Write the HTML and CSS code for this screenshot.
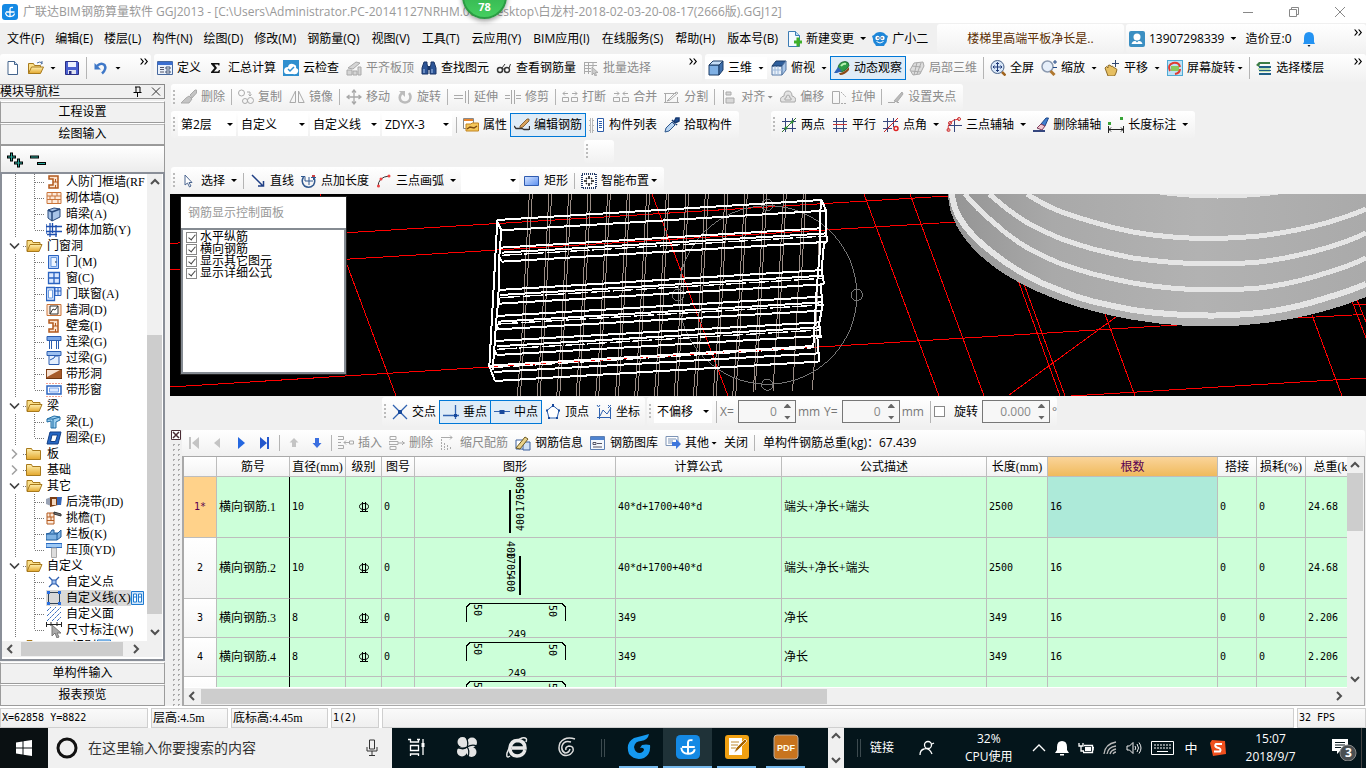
FILE: index.html
```html
<!DOCTYPE html>
<html lang="zh-CN">
<head>
<meta charset="utf-8">
<title>广联达BIM钢筋算量软件 GGJ2013</title>
<link rel="stylesheet" href="styles.css">
</head>
<body>
<svg class="defs" aria-hidden="true">
<defs>
<linearGradient id="gFolder" x1="0" y1="0" x2="0" y2="1"><stop offset="0" stop-color="#fff0b0"/><stop offset="1" stop-color="#e3a72c"/></linearGradient>
<linearGradient id="gBlue" x1="0" y1="0" x2="1" y2="1"><stop offset="0" stop-color="#d5e4ff"/><stop offset="1" stop-color="#5b8ff0"/></linearGradient>
<linearGradient id="gDisc" x1="0" y1="0" x2="1" y2="0"><stop offset="0" stop-color="#949494"/><stop offset=".25" stop-color="#a9a9a9"/><stop offset=".6" stop-color="#b2b2b2"/><stop offset="1" stop-color="#aaa"/></linearGradient>
</defs>
<symbol id="logo" viewBox="0 0 16 16"><rect width="16" height="16" rx="3" fill="#1489e4"/><path d="M8 12.500V5q0-2 3-1.500M4 8h8.500M3.500 8.500q.5 4 4.500 4t4.500-3" fill="none" stroke="#fff" stroke-width="1.300"/></symbol>
<symbol id="doc" viewBox="0 0 16 16"><path d="M3 1.500h6.500l3 3v10H3z" fill="#fff" stroke="#44648c"/><path d="M9.500 1.500v3h3" fill="#cfe0f5" stroke="#44648c"/></symbol>
<symbol id="open" viewBox="0 0 16 16"><path d="M.5 13.500v-10h5l1 2h6v2" fill="#fbe08a" stroke="#a87a1c"/><path d="M.5 13.500l3-6.500h12l-3 6.500z" fill="url(#gFolder)" stroke="#a87a1c"/><path d="M9 3q3-2 5 0l-1 1.500M14 1v3" fill="none" stroke="#4c6ea0"/></symbol>
<symbol id="save" viewBox="0 0 16 16"><path d="M1.500 1.500h12l1 1v12h-13z" fill="#4a5fd0" stroke="#2a2f86"/><path d="M4 2h8v5H4z" fill="#eef1ff"/><path d="M4 10h8v4H4z" fill="#dfe3f0"/><path d="M5 11h2.500v3H5z" fill="#2a2f86"/></symbol>
<symbol id="undo" viewBox="0 0 16 16"><path d="M4 6q4-4 7.500-1 2.500 4-2.500 8.500" fill="none" stroke="#3f78c8" stroke-width="2.500"/><path d="M1.500 3v6.500h6.500z" fill="#3f78c8"/></symbol>
<symbol id="define" viewBox="0 0 16 16"><path d="M.5 1.500h15v13H.5z" fill="#eaf1fb" stroke="#47699f"/><path d="M.5 2h15v3H.5z" fill="#3c6fd0"/><path d="M3 7.500h4M3 9.500h4M3 12h4" stroke="#556"/><path d="M9 7h4v2H9zM9 11h4v2H9z" fill="#fff" stroke="#3d4f70"/></symbol>
<symbol id="sigma" viewBox="0 0 16 16"><path d="M3 3h8.500v2.500h-1L10 4.500H6.500L9 8l-3 3.500h4l1-1.500h1l-.5 3H3v-1L6.500 8 3 4z" fill="#111"/></symbol>
<symbol id="cloud" viewBox="0 0 16 16"><rect width="16" height="16" fill="#2f8fcf"/><path d="M1 11q0-4 4-4 1-4 5-3t3 4q3 1 2 4t-5 2H3q-2-.5-2-3z" fill="#fff"/><path d="M5 9l2 2 4-4" fill="none" stroke="#2f8fcf" stroke-width="1.500"/></symbol>
<symbol id="align-top" viewBox="0 0 16 16"><path d="M2 8l8-6 4 1-7 6zM1 10h5v5H1zM7 11h4v4H7zM12 7h3v8h-3z" fill="#d5d5d5" stroke="#a9a9a9"/></symbol>
<symbol id="binoc" viewBox="0 0 16 16"><path d="M3 2h3v2l1 4v6H1V8zM10 2h3l2 6v6H9V8l1-4z" fill="#2c5496" stroke="#1a3566"/><path d="M7 6h2v4H7z" fill="#1a3566"/><path d="M3 9v4M11 9v4" stroke="#a8c4ec"/></symbol>
<symbol id="glasses" viewBox="0 0 16 16"><circle cx="4" cy="10" r="2.500" fill="#fff" stroke="#333" stroke-width="1.500"/><circle cx="11" cy="10" r="2.500" fill="#fff" stroke="#333" stroke-width="1.500"/><path d="M6.500 9.500l2-1M6 8l3-4M13 8l1.500-4" fill="none" stroke="#333"/></symbol>
<symbol id="batch" viewBox="0 0 16 16"><path d="M1 2.500h13M1 5.500h13M1 8.500h7M1 11.500h7M1.500 2v12M5.500 2v12M10 2v5" stroke="#aaa"/><path d="M9 7v8l2-2 1 3 1.500-.5-1-3H15z" fill="#ccc" stroke="#999" stroke-width=".7"/></symbol>
<symbol id="cube" viewBox="0 0 16 16"><path d="M1 5h10v10H1z" fill="#7fb0e4" stroke="#1d3d66"/><path d="M1 5l4-4h10l-4 4z" fill="#c6def7" stroke="#1d3d66"/><path d="M11 5l4-4v9l-4 5z" fill="#3f70ad" stroke="#1d3d66"/></symbol>
<symbol id="topview" viewBox="0 0 16 16"><path d="M1 6h10v9H1z" fill="#e9f1fa" stroke="#5778a5"/><path d="M1 6l4-5h10l-4 5z" fill="#2f5f9c" stroke="#1d3d66"/><path d="M11 6l4-5v9l-4 5z" fill="#a9c6e8" stroke="#5778a5"/><path d="M4 6v9M7 6v9M1 10h10" stroke="#9db8d9"/></symbol>
<symbol id="orbit" viewBox="0 0 16 16"><path d="M4 9Q4 2 11 1.500q4 0 4 4Q13 10 8 12q-3 0-4-3z" fill="#2d9c46" stroke="#155e28" stroke-width=".8"/><path d="M7 6q2-3 5-2" fill="none" stroke="#b6f3b0" stroke-width="2"/><path d="M0 13l4-6 4 4-5 2z" fill="#2e63b8"/><path d="M5 13q5 0 10-6l0 3q-4 5-9 5z" fill="#8c4a18"/></symbol>
<symbol id="local3d" viewBox="0 0 16 16"><path d="M1 10l4-7 9-1 1 4-4 8-7 1z" fill="#ddd" stroke="#aaa"/><path d="M3 6l9 1M8 2.500L5 15M12 3l-4 11M2 11l10 1" stroke="#aaa"/></symbol>
<symbol id="fit" viewBox="0 0 16 16"><circle cx="7.500" cy="7" r="6.500" fill="#d8e7f8" stroke="#4a6288"/><path d="M7.500 2.500v9M3 7h9M6 4l1.500-1.500L9 4M6 10l1.500 1.500L9 10M4.500 5.500L3 7l1.500 1.500M10.500 5.500L12 7l-1.500 1.500" fill="none" stroke="#203a78"/><path d="M12 12l3.500 3.500" stroke="#a0641e" stroke-width="2.500"/></symbol>
<symbol id="zoom" viewBox="0 0 16 16"><circle cx="6.500" cy="6.500" r="5.500" fill="#e6effa" stroke="#8b9ab0" stroke-width="1.500"/><path d="M9.500 11l4 4" stroke="#b07830" stroke-width="3"/><path d="M12 2h4M14 0v4M12 7.500h4" stroke="#224a88"/></symbol>
<symbol id="pan" viewBox="0 0 16 16"><path d="M1 8l1.500-1.500L4 8V5.500L6 5l1 1.500L8.500 6l1 1.500L11 8l2 1.500-1 3.500-1.500 3H4z" fill="#e6bf62" stroke="#8c6a28"/><path d="M8 3.500h7M11.500 0v7" stroke="#30466f"/></symbol>
<symbol id="screenrot" viewBox="0 0 16 16"><rect x=".5" y=".5" width="15" height="15" fill="#bfe2f6" stroke="#4eaad4"/><rect x="4" y="6" width="8" height="5" fill="#8cc95c"/><path d="M3 11Q0 5 6 3q6-1 7 4M13 9q0 4-5 5" fill="none" stroke="#e03c32" stroke-width="2"/></symbol>
<symbol id="floors" viewBox="0 0 16 16"><path d="M0 5l3-3h11v2H4l-1 3z" fill="#3c7c44"/><path d="M3 6h12v2H3zM3 10h12v1H3zM3 13h12v2H3z" fill="#1f5f86"/><path d="M2 8h12v2H2zM3 11h11v1H3z" fill="#bfe0b0"/></symbol>
<symbol id="newchg" viewBox="0 0 16 16"><path d="M2.500.5h7l4 4v11h-11z" fill="#f5faff" stroke="#3c7cb4"/><path d="M9.500.5v4h4" fill="#bcdcf5" stroke="#3c7cb4"/><path d="M8 9.500h2.500v-3h3v3H16v3h-2.500v3h-3v-3H8z" fill="#3eb02a"/></symbol>
<symbol id="bot" viewBox="0 0 16 16"><path d="M0 5l2-1q2-3 6-3t6 3l2 1-1 3q0 4-2 5l-1 2H4l-1-2Q1 12 1 8z" fill="#1e86d8"/><circle cx="5.500" cy="7" r="2.200" fill="#fff"/><circle cx="10.500" cy="7" r="2.200" fill="#fff"/><circle cx="6" cy="7" r=".8" fill="#124"/><circle cx="10" cy="7" r=".8" fill="#124"/><path d="M4.500 10.500q3.500 3 7 0" stroke="#fff" fill="none"/></symbol>
<symbol id="user" viewBox="0 0 16 16"><rect width="16" height="16" rx="2" fill="#3b8fc2"/><circle cx="8" cy="6" r="3.500" fill="#fff"/><path d="M2.500 13q1-3.500 4-3l1.500 1.500L9.500 10q3-.5 4 3z" fill="#fff"/></symbol>
<symbol id="bell" viewBox="0 0 16 16"><path d="M8 1q5 0 5 6v4l1 2H2l1-2V7q0-6 5-6z" fill="#2493f2"/><path d="M6.500 14h3l-1.500 2z" fill="#123"/></symbol>
<symbol id="erase" viewBox="0 0 16 16"><path d="M0 14h8l3-4-3-3-3 2zM9 6l5-5h1.500v3L11 9z" fill="#c4c4c4" stroke="#aaa"/></symbol>
<symbol id="copy" viewBox="0 0 16 16"><circle cx="3.500" cy="4" r="3" fill="none" stroke="#aaa"/><circle cx="7" cy="12" r="2.500" fill="none" stroke="#aaa"/><circle cx="12.500" cy="11.500" r="3" fill="none" stroke="#aaa"/><path d="M9 3h3v4M10.500 5.500L12 7l1.500-1.500" fill="none" stroke="#aaa"/></symbol>
<symbol id="mirror" viewBox="0 0 16 16"><path d="M6.500 2v11.500H.8zM9.500 2v11.500h5.700z" fill="none" stroke="#aaa"/></symbol>
<symbol id="move" viewBox="0 0 16 16"><path d="M8 1v14M1 8h14M6 3.500L8 1l2 2.500M6 12.500L8 15l2-2.500M3.500 6L1 8l2.500 2M12.500 6L15 8l-2.500 2" fill="none" stroke="#a8a8a8" stroke-width="1.300"/></symbol>
<symbol id="rotate" viewBox="0 0 16 16"><path d="M12 4q3 4 0 8-4 3-8 0-3-4 1-8" fill="none" stroke="#bbb" stroke-width="2.500"/><path d="M2 2h6v6z" fill="#bbb"/></symbol>
<symbol id="extend" viewBox="0 0 16 16"><path d="M0 6.500h9M0 9.500h9M11.500 2v12M14.500 1v14" stroke="#aaa"/></symbol>
<symbol id="trim" viewBox="0 0 16 16"><path d="M0 6.500h5M0 9.500h5M6.500 1v14M9.500 1v14M11 6.500h5M11 9.500h5" stroke="#aaa"/></symbol>
<symbol id="break" viewBox="0 0 16 16"><path d="M.5 8.500h6v4h-6zM9.500 8.500h6v4h-6z" fill="none" stroke="#aaa"/><path d="M1 4.500h5M10 4.500h5M3 2.500L1 4.500l2 2M13 2.500l2 2-2 2" fill="none" stroke="#aaa"/></symbol>
<symbol id="merge" viewBox="0 0 16 16"><path d="M.5 8.500h6v4h-6zM9.500 8.500h6v4h-6z" fill="none" stroke="#aaa"/><path d="M1 4.500h5M10 4.500h5M4 2.500l2 2-2 2M12 2.500l-2 2 2 2" fill="none" stroke="#aaa"/></symbol>
<symbol id="split" viewBox="0 0 16 16"><path d="M0 4.500h12M0 13.500h15M1.500 4v9M13.500 8v6M3 12l9-9 2 1-8 7z" fill="none" stroke="#aaa"/></symbol>
<symbol id="align" viewBox="0 0 16 16"><path d="M2.500 1v14" stroke="#aaa"/><path d="M5 3h5v3H5zM5 9h8v5H5z" fill="#d8d8d8" stroke="#aaa"/></symbol>
<symbol id="offset" viewBox="0 0 16 16"><path d="M1 13q-2-5 3-6 0-5 4-5t4 5q5 1 3 6zM5 11q-1-2 1-2 0-3 2-3t2 3q2 0 1 2z" fill="#e3e3e3" stroke="#aaa"/></symbol>
<symbol id="stretch" viewBox="0 0 16 16"><path d="M1.500 2.500h7v12h-7z" fill="none" stroke="#aaa"/><path d="M10 3l5 5M10 14.500h5" stroke="#aaa" stroke-dasharray="2 1"/></symbol>
<symbol id="grip" viewBox="0 0 16 16"><path d="M0 13.500h7M9 13.500h2M6 12L14 3l1 2-6 8z" fill="#bbb" stroke="#aaa"/></symbol>
<symbol id="prop" viewBox="0 0 16 16"><path d="M.5 1.500h10v10H.5z" fill="#fff" stroke="#888"/><path d="M1 2h9v2H1z" fill="#e8842c"/><path d="M3 7h5l1-1h6.500v8H3z" fill="#f4c75c" stroke="#c28420"/><path d="M4 12l3-2 4 1 3-2" fill="none" stroke="#7c4a10" stroke-width="1.500"/></symbol>
<symbol id="editbar" viewBox="0 0 16 16"><path d="M0 9l2 2.500h6l2 1h5M15.500 9v4" fill="none" stroke="#333" stroke-width="1.300"/><path d="M6 9l7-7h2v2l-6 6-3 1z" fill="#d9a45c" stroke="#6d4a20" stroke-width=".8"/></symbol>
<symbol id="list" viewBox="0 0 16 16"><path d="M1 2h3v3H1zM1 7h3v3H1zM1 12h3v3H1z" fill="none" stroke="#777" stroke-dasharray="1 1"/><path d="M8.500 1.500h6v13h-6z" fill="#fff" stroke="#2d5ca8"/><path d="M10 4.500h3M10 6.500h3M10 8.500h3M10 10.500h3" stroke="#2d5ca8"/></symbol>
<symbol id="pick" viewBox="0 0 16 16"><path d="M1 15l1-4 6-6 3 3-6 6z" fill="#b9d5f2" stroke="#2d578c"/><path d="M8 3l5 5M10 5l2-4 3 0 0 3-4 2z" fill="#1d4f98" stroke="#173a70" stroke-width="1.500"/></symbol>
<symbol id="ax2" viewBox="0 0 16 16"><path d="M4.500 1v14M11.500 1v14M1 4.500h14M1 11.500h14" stroke="#35467e"/><path d="M1 15L15 1" stroke="#2f6f2f"/><circle cx="5" cy="11" r="1.500" fill="#2f8f2f"/><circle cx="11" cy="5" r="1.500" fill="#2f8f2f"/></symbol>
<symbol id="ax3" viewBox="0 0 16 16"><path d="M4.500 1v14M11.500 1v14" stroke="#35467e"/><path d="M1 4.500h14M1 11.500h14" stroke="#35467e"/><path d="M1 7.500h14" stroke="#c33"/></symbol>
<symbol id="ax4" viewBox="0 0 16 16"><path d="M4.500 1v14M10.500 1v9M0 4.500h15M0 11.500h9" stroke="#35467e"/><path d="M1 15L15 1" stroke="#c22"/><circle cx="13" cy="11.500" r="2" fill="none" stroke="#d22" stroke-width="1.500"/></symbol>
<symbol id="ax5" viewBox="0 0 16 16"><path d="M8.500 2v13M2 8.500h14" stroke="#35467e"/><path d="M2 14Q1 3 13 2" fill="none" stroke="#d33"/><circle cx="2.500" cy="13" r="1.500" fill="none" stroke="#c33"/><circle cx="4" cy="6" r="1.500" fill="none" stroke="#c33"/><circle cx="13" cy="2" r="1.500" fill="none" stroke="#c33"/></symbol>
<symbol id="delax" viewBox="0 0 16 16"><path d="M8 7l5-6h2.500L12 9z" fill="#3f7fd0" stroke="#1d4485"/><path d="M4 11l4-4 4 2-3 4z" fill="#f2c8d0" stroke="#7b3b5c"/><path d="M0 14h12" stroke="#35467e" stroke-width="2"/></symbol>
<symbol id="dim" viewBox="0 0 16 16"><path d="M.5 9v7M15.500 9v7M1 12.500h14M3 10.500L1 12.500l2 2M13 10.500l2 2-2 2" fill="none" stroke="#222"/><path d="M0 5h3v3H0zM12 0h3v3h-3z" fill="#36a336"/></symbol>
<symbol id="cursor" viewBox="0 0 16 16"><path d="M4 2v10l2.500-2 2 4 1.500-1-2-3.500h3z" fill="#fff" stroke="#4c6690"/></symbol>
<symbol id="line" viewBox="0 0 16 16"><path d="M2 2l11 11M8 13h5.500V8" fill="none" stroke="#1f3f85" stroke-width="1.500"/></symbol>
<symbol id="ptlen" viewBox="0 0 16 16"><path d="M2.500 4q-3 5 1 9 5 3 9-1 2.500-4 0-8" fill="none" stroke="#31598f" stroke-width="1.500"/><path d="M8 4v8M4 8h8M0 3.500h4V8M12.500 3v4M10 4.500h5" fill="none" stroke="#31598f"/><path d="M11 2h3v2h-3z" fill="#c44"/></symbol>
<symbol id="arc3" viewBox="0 0 16 16"><path d="M2 14Q2 4 13 3" fill="none" stroke="#333"/><circle cx="2.500" cy="13" r="1.500" fill="#e44"/><circle cx="5" cy="6" r="1.500" fill="#e44"/><circle cx="13" cy="3" r="1.500" fill="#e44"/></symbol>
<symbol id="rect" viewBox="0 0 16 16"><path d="M.5 3.500h14v9H.5z" fill="url(#gBlue)" stroke="#2f5bb0"/></symbol>
<symbol id="smart" viewBox="0 0 16 16"><path d="M1 1h14v14H1z" fill="#fff" stroke="#233a66" stroke-dasharray="1 1" stroke-width="2"/><path d="M8 3v3M8 10v3M3 8h3M10 8h3M5 5l1 1M11 5l-1 1M5 11l1-1M11 11l-1-1" stroke="#111" stroke-width="1.500"/></symbol>
<symbol id="cross" viewBox="0 0 16 16"><path d="M1 1l14 14M15 1L1 15" stroke="#2f62b0" stroke-width="1.300"/><path d="M6 6h4v4H6z" fill="#17499c"/></symbol>
<symbol id="perp" viewBox="0 0 16 16"><path d="M0 11.500h16M12.500 1v14" stroke="#2f62b0" stroke-width="1.300"/><path d="M11 10h3v3h-3z" fill="#17499c"/></symbol>
<symbol id="mid" viewBox="0 0 16 16"><path d="M0 7.500h16" stroke="#2f62b0"/><path d="M5.500 6h5v4h-5z" fill="#17499c"/></symbol>
<symbol id="vertex" viewBox="0 0 16 16"><path d="M8 1.500l6 5-2 7.500H4L2 6.500z" fill="#fff" stroke="#2f62b0"/><path d="M7 0h2v3H7zM1 5.500h2v2H1zM13 5.500h2v2h-2zM3 13h2v2H3zM11 13h2v2h-2z" fill="#17499c"/></symbol>
<symbol id="coord" viewBox="0 0 16 16"><path d="M3.500 4v11M1 13.500h14M14.500 4v11M4 12l3-6 4 4 4-6M1 1l1.500 2L4 1M12 1l3 3M15 1l-3 3" fill="none" stroke="#2f62b0"/></symbol>
<symbol id="first" viewBox="0 0 16 16"><path d="M4 2h2v12H4zM14 2v12L7 8z" fill="#c4c4c4"/></symbol>
<symbol id="prev" viewBox="0 0 16 16"><path d="M11 3v10L5 8z" fill="#c4c4c4"/></symbol>
<symbol id="next" viewBox="0 0 16 16"><path d="M5 2v12l7-6z" fill="#2467e0"/></symbol>
<symbol id="last" viewBox="0 0 16 16"><path d="M3 2v12l7-6zM10 2h2v12h-2z" fill="#2457cc"/></symbol>
<symbol id="up" viewBox="0 0 16 16"><path d="M8 3l4.500 4.500H10V12H6V7.500H3.500z" fill="#c4c4c4"/></symbol>
<symbol id="down" viewBox="0 0 16 16"><path d="M8 13L3.500 8H6V3h4v5h2.500z" fill="#3b6fe0"/></symbol>
<symbol id="insrow" viewBox="0 0 16 16"><path d="M0 1.500h5.500v3H0M0 7.500h3M0 10.500h5.500v3H0M11.500 6h4v3h-4zM6 7.500h5M8 5.500l-2 2 2 2" fill="none" stroke="#aaa"/></symbol>
<symbol id="delrow" viewBox="0 0 16 16"><path d="M1 1.500h6v3H1zM0 6.500h9v3H0zM1 11.500h6v3H1zM9 8h7M13 6l2 2-2 2" fill="none" stroke="#aaa"/></symbol>
<symbol id="scale" viewBox="0 0 16 16"><path d="M1 2.500h11M10 .5l2 2-2 2" fill="none" stroke="#aaa"/><path d="M1.500 4v11M4.500 8v7M7.500 10v5M10.500 12v3" fill="none" stroke="#aaa" stroke-dasharray="2 1"/></symbol>
<symbol id="info" viewBox="0 0 16 16"><path d="M1 5h9v9H1z" fill="#fff" stroke="#3a5f9c"/><path d="M8 7h7v8H8z" fill="#cfe0f5" stroke="#3a5f9c"/><path d="M1 13L10 2l3 2-8 10z" fill="#e9d18a" stroke="#6d5a20"/></symbol>
<symbol id="lib" viewBox="0 0 16 16"><path d="M.5 1.500h14v13H.5z" fill="#f4f8fd" stroke="#5b7fb4"/><path d="M1 2h13v3H1z" fill="#4f83cf"/><path d="M3 7.500h3v2H3zM7 8.500h5M3 12h9" fill="none" stroke="#556"/></symbol>
<symbol id="other" viewBox="0 0 16 16"><path d="M1 1.500h12v9H1z" fill="#fff" stroke="#7c93b5"/><path d="M3 4h8M3 6h5M3 8h4" stroke="#7c93b5"/><path d="M7 7h4V4l5 5-5 5v-3H7z" fill="#3f77dc"/></symbol>
<symbol id="t-mid" viewBox="0 0 46 16"><path d="M15.500 0v16M34.500 0v16M35 8.500h10" stroke="#777" stroke-dasharray="1 1"/></symbol>
<symbol id="t-end" viewBox="0 0 46 16"><path d="M15.500 0v16M34.500 0v8M35 8.500h10" stroke="#777" stroke-dasharray="1 1"/></symbol>
<symbol id="t-open" viewBox="0 0 46 16"><path d="M10 5.500l4.500 4.500L19 5.500" fill="none" stroke="#404040" stroke-width="1.700"/><path d="M23 8.500h3" stroke="#777" stroke-dasharray="1 1"/><path d="M27 13V2.500h5l1 2h7v2" fill="#fbe08a" stroke="#a87a1c"/><path d="M27 13.500l3-7h12l-3 7z" fill="url(#gFolder)" stroke="#a87a1c"/></symbol>
<symbol id="t-shut" viewBox="0 0 46 16"><path d="M12 3.500L16.500 8 12 12.500" fill="none" stroke="#a0a0a0" stroke-width="1.500"/><path d="M23 8.500h3" stroke="#777" stroke-dasharray="1 1"/><path d="M26.500 13.500V2.500h5l1 2h8v9z" fill="url(#gFolder)" stroke="#a87a1c"/></symbol>
<symbol id="niche" viewBox="0 0 16 16"><path d="M3 2h9v12H3v-3h4V5H3z" fill="#fbe3cf" stroke="#b35a1e" stroke-width="1.500"/><path d="M7 8h5M9.500 5v3M9.500 11v3" stroke="#b35a1e"/></symbol>
<symbol id="brick" viewBox="0 0 16 16"><path d="M1 2.500h14v11H1z" fill="#fdeadb" stroke="#c9743a"/><path d="M1 6h14M1 9.500h14M6 2v4M11 2v4M4 6v4M9 6v4M6 10v4M12 10v4" stroke="#c9743a"/></symbol>
<symbol id="beam1" viewBox="0 0 16 16"><path d="M2 4l6-2 6 1v8l-8 4-4-3z" fill="#a8c4e8" stroke="#27487c"/><path d="M2 4l4 2v9M6 6l8-3" fill="none" stroke="#27487c" stroke-width="1.500"/></symbol>
<symbol id="brickbar" viewBox="0 0 16 16"><path d="M4 1v14M10 3v12M0 4.500h16M0 9.500h16M1 12.500h10M6.500 1v10M0 2v10" stroke="#1d4fb0" stroke-width="1.300" fill="none"/></symbol>
<symbol id="door" viewBox="0 0 16 16"><path d="M2.500 1.500h10v13h-10z" fill="#b9d2fa" stroke="#2a63c0"/><path d="M5 3.500h5.500v9H5z" fill="#eef5ff" stroke="#6a9be0"/><path d="M9 8h1.500" stroke="#123"/></symbol>
<symbol id="window" viewBox="0 0 16 16"><path d="M2.500 2.500h11v11h-11zM8 2v12M2 8h12" fill="#dce9ff" stroke="#2a63c0" stroke-width="1.300"/></symbol>
<symbol id="doorwin" viewBox="0 0 16 16"><path d="M.5 1.500h8v13h-8z" fill="#e1edff" stroke="#2a63c0" stroke-width="1.300"/><path d="M2.500 4h4v8h-4z" fill="#fff" stroke="#6a9be0"/><path d="M9 1.500h6v8H9zM12 1v8M9 5h6" fill="#dce9ff" stroke="#2a63c0"/></symbol>
<symbol id="hole" viewBox="0 0 16 16"><path d="M1 2.500h14v11H1z" fill="#fdeadb" stroke="#c9743a"/><path d="M4 4h8v8H4z" fill="#fff" stroke="#333"/><path d="M4 12l3-5 2 1 3-4" fill="none" stroke="#333"/></symbol>
<symbol id="lbeam" viewBox="0 0 16 16"><path d="M1 2.500h14v4H1z" fill="#79a7e8" stroke="#2a5db0"/><path d="M3.500 7v8M5.500 7v8M10.500 7v8M12.500 7v8" stroke="#2a5db0"/></symbol>
<symbol id="lintel" viewBox="0 0 16 16"><path d="M1 1.500h14v4H1z" fill="#9cc0f0" stroke="#2a5db0"/><path d="M3 5.500h10v9H3z" fill="#e3efff" stroke="#2a5db0"/><path d="M4 10l4-2 1-2h3" fill="none" stroke="#2a5db0"/></symbol>
<symbol id="striphole" viewBox="0 0 16 16"><path d="M0 3.500h16v9H0z" fill="#a65a2a" stroke="#6d3410"/><path d="M1 11L14 4H1z" fill="#f6e0cf"/></symbol>
<symbol id="stripwin" viewBox="0 0 16 16"><path d="M0 1.500h16M0 14.500h16" stroke="#f0a090" stroke-dasharray="2 1"/><path d="M1 4h14v8H1z" fill="#fff" stroke="#2a63c0" stroke-width="1.500"/><path d="M3.500 6h9v4h-9z" fill="#dce9ff" stroke="#7ba6ec"/></symbol>
<symbol id="beamL" viewBox="0 0 16 16"><path d="M1 5l7-3 6 1v3l-4 2v6H5V7L1 8z" fill="#9fd0ef" stroke="#1f6da5"/><path d="M1 5h6l7-2M7 5v9" fill="none" stroke="#1f6da5"/></symbol>
<symbol id="ringbeam" viewBox="0 0 16 16"><path d="M4 2h11l-3 12H1z" fill="#2667c4" stroke="#123f85"/><path d="M6 5h5.500l-2 6.500H4.500z" fill="#fff" stroke="#123f85"/></symbol>
<symbol id="pour" viewBox="0 0 16 16"><path d="M0 5l5-2v9l-5-2z" fill="#9aa3b5"/><path d="M4 3h8v8l-8 2z" fill="#7a3c14"/><path d="M6 5h4v6H6z" fill="#f2d8c0"/><path d="M11 3h5l-1 8h-4z" fill="#3566b8"/></symbol>
<symbol id="eave" viewBox="0 0 16 16"><path d="M1 3h7v11H1z" fill="#fdeadb" stroke="#b35a1e"/><path d="M1 7h7M1 10.500h7M4 3v4M5 7v4" stroke="#b35a1e"/><path d="M8 2l7 2v2l-7-2z" fill="#777" stroke="#333"/></symbol>
<symbol id="rail" viewBox="0 0 16 16"><path d="M0 8l4-1 2-3h2v3h4l3-3v7l-4 3H0z" fill="#7fb3e3" stroke="#1f5c9c"/><path d="M0 8h11l4-4M11 8v6" fill="none" stroke="#1f5c9c"/></symbol>
<symbol id="coping" viewBox="0 0 16 16"><path d="M0 1.500h16v4H0z" fill="#9cc8f5" stroke="#2a6bc0"/><path d="M5.500 6h5v9.500h-5z" fill="#ddd" stroke="#aaa"/></symbol>
<symbol id="cpoint" viewBox="0 0 16 16"><path d="M3 3l3 3M13 3l-3 3M3 13l3-3M13 13l-3-3" stroke="#2a5cae" stroke-width="1.300"/><path d="M6 6h4v4H6z" fill="#9fc0f0" stroke="#2a5cae"/></symbol>
<symbol id="cline" viewBox="0 0 16 16"><path d="M2.500 2.500h11v11h-11z" fill="none" stroke="#345"/><path d="M1 1h3v3H1zM12 1h3v3h-3zM1 12h3v3H1zM12 12h3v3h-3z" fill="#2a6fe0"/></symbol>
<symbol id="cface" viewBox="0 0 16 16"><path d="M1 5l4-4M1 10l9-9M1 15L15 1M6 15l9-9M11 15l4-4" stroke="#3a6fc0" stroke-dasharray="3 .6"/></symbol>
<symbol id="cdim" viewBox="0 0 16 16"><path d="M.5 0v5M15.500 0v5M1 2.500h14M5 0v4M11 0v4" stroke="#222"/><path d="M6 3v11l3-3 2 5 2-1-2-4h4z" fill="#aaa" stroke="#777"/></symbol>
<symbol id="grade" viewBox="0 0 16 16"><ellipse cx="8" cy="7.500" rx="4.500" ry="3" fill="none" stroke="#000"/><path d="M6.500 3v10M9.500 3v10M4 12.500h8" stroke="#000"/></symbol>
<symbol id="chev-r" viewBox="0 0 16 16"><path d="M5 4.500h1.500L9 7.500l-2.500 3H5L7.500 7.500zM9 4.500h1.500l2.500 3-2.500 3H9l2.500-3z" fill="#000"/></symbol>
<symbol id="s-up" viewBox="0 0 16 16"><path d="M4 10l4-4 4 4" fill="none" stroke="#505050" stroke-width="2"/></symbol>
<symbol id="s-down" viewBox="0 0 16 16"><path d="M4 6l4 4 4-4" fill="none" stroke="#505050" stroke-width="2"/></symbol>
<symbol id="s-left" viewBox="0 0 16 16"><path d="M10 4L6 8l4 4" fill="none" stroke="#505050" stroke-width="2"/></symbol>
<symbol id="s-right" viewBox="0 0 16 16"><path d="M6 4l4 4-4 4" fill="none" stroke="#505050" stroke-width="2"/></symbol>
<symbol id="hook" viewBox="0 0 200 38"><path d="M51.500 23V8l4-4h91l4 4v14" fill="none" stroke="#000" shape-rendering="crispEdges"/></symbol>
</svg>

<div class="app">
<header class="title">
  <svg class="i"><use href="#logo"/></svg>
  <h1>广联达BIM钢筋算量软件 GGJ2013 - [C:\Users\Administrator.PC-20141127NRHM.000\Desktop\白龙村-2018-02-03-20-08-17(2666版).GGJ12]</h1>
  <div class="winbtns">
    <button aria-label="最小化"><svg width="12" height="12"><path d="M1 6.500h10" stroke="#888"/></svg></button>
    <button aria-label="还原"><svg width="12" height="12"><path d="M1.500 3.500h7v7h-7zM3.500 3.500v-2h7v7h-2" fill="none" stroke="#888"/></svg></button>
    <button aria-label="关闭"><svg width="12" height="12"><path d="M1 1l10 10M11 1L1 11" stroke="#888"/></svg></button>
  </div>
  <div class="badge">78</div>
</header>

<div class="row menurow">
  <nav class="menu">
    <button>文件(F)</button><button>编辑(E)</button><button>楼层(L)</button><button>构件(N)</button><button>绘图(D)</button><button>修改(M)</button><button>钢筋量(Q)</button><button>视图(V)</button><button>工具(T)</button><button>云应用(Y)</button><button>BIM应用(I)</button><button>在线服务(S)</button><button>帮助(H)</button><button>版本号(B)</button>
    <button class="tb"><svg class="i"><use href="#newchg"/></svg>新建变更<span class="ar"></span></button><button class="tb"><svg class="i"><use href="#bot"/></svg>广小二</button>
  </nav>
  <div class="bar ad"><a href="#">楼梯里高端平板净长是..</a></div>
  <div class="bar grow account">
    <button class="tb"><svg class="i"><use href="#user"/></svg>13907298339<span class="ar"></span></button><button class="tb">造价豆:0</button><button class="tb" aria-label="通知"><svg class="i"><use href="#bell"/></svg></button>
    <button class="more" aria-label="更多"><svg class="i"><use href="#chev-r"/></svg></button>
  </div>
</div>

<div class="row mainbar">
  <div class="bar quick">
    <button class="tb" aria-label="新建"><svg class="i"><use href="#doc"/></svg></button><button class="tb" aria-label="打开"><svg class="i"><use href="#open"/></svg><span class="ar"></span></button><button class="tb" aria-label="保存"><svg class="i"><use href="#save"/></svg></button><span class="sep"></span><button class="tb" aria-label="撤销"><svg class="i"><use href="#undo"/></svg><span class="ar"></span></button>
    <button class="more" aria-label="更多"><svg class="i"><use href="#chev-r"/></svg></button>
  </div>
  <div class="bar tools">
    <button class="tb"><svg class="i"><use href="#define"/></svg>定义</button><button class="tb"><svg class="i"><use href="#sigma"/></svg>汇总计算</button><button class="tb"><svg class="i"><use href="#cloud"/></svg>云检查</button><button class="tb off"><svg class="i"><use href="#align-top"/></svg>平齐板顶</button><button class="tb"><svg class="i"><use href="#binoc"/></svg>查找图元</button><button class="tb"><svg class="i"><use href="#glasses"/></svg>查看钢筋量</button><button class="tb off"><svg class="i"><use href="#batch"/></svg>批量选择</button>
    <button class="more" aria-label="更多"><svg class="i"><use href="#chev-r"/></svg></button>
  </div>
  <div class="bar grow">
    <button class="tb white"><svg class="i"><use href="#cube"/></svg>三维<span class="ar"></span></button><button class="tb"><svg class="i"><use href="#topview"/></svg>俯视<span class="ar"></span></button><button class="tb on"><svg class="i"><use href="#orbit"/></svg>动态观察</button><button class="tb off"><svg class="i"><use href="#local3d"/></svg>局部三维</button><span class="sep"></span><button class="tb"><svg class="i"><use href="#fit"/></svg>全屏</button><button class="tb"><svg class="i"><use href="#zoom"/></svg>缩放<span class="ar"></span></button><button class="tb"><svg class="i"><use href="#pan"/></svg>平移<span class="ar"></span></button><button class="tb"><svg class="i"><use href="#screenrot"/></svg>屏幕旋转<span class="ar tight"></span></button><span class="sep"></span><button class="tb"><svg class="i"><use href="#floors"/></svg>选择楼层</button>
    <button class="more" aria-label="更多"><svg class="i"><use href="#chev-r"/></svg></button>
  </div>
</div>

<div class="work">
<aside class="dock song">
  <div class="docktitle"><h2>模块导航栏</h2><svg width="34" height="13"><path d="M6 2v5M10 2v5M5 2h5M3.500 7.500h8M7.500 8v4" stroke="#000" fill="none"/><path d="M22 2.500l8 8M30 2.500l-8 8" stroke="#333"/></svg></div>
  <button class="navbtn">工程设置</button>
  <button class="navbtn">绘图输入</button>
  <div class="expand"><svg width="40" height="18"><path d="M1 6h9M5.500 1.500v9M8 12h9M12.500 7.500v9M24 6h9M31 12.500h9" stroke="#000" stroke-width="3"/><path d="M2 6h7M5.500 2.500v7M9 12h7M12.500 8.500v7M25 6h7M32 12.500h7" stroke="#2aa89c"/></svg></div>
  <div class="treebox">
    <ul class="tree">
      <li><svg class="t"><use href="#t-mid"/></svg><svg class="i"><use href="#niche"/></svg>人防门框墙(RF</li>
      <li><svg class="t"><use href="#t-mid"/></svg><svg class="i"><use href="#brick"/></svg>砌体墙(Q)</li>
      <li><svg class="t"><use href="#t-mid"/></svg><svg class="i"><use href="#beam1"/></svg>暗梁(A)</li>
      <li><svg class="t"><use href="#t-end"/></svg><svg class="i"><use href="#brickbar"/></svg>砌体加筋(Y)</li>
      <li class="f"><svg class="t"><use href="#t-open"/></svg>门窗洞</li>
      <li><svg class="t"><use href="#t-mid"/></svg><svg class="i"><use href="#door"/></svg>门(M)</li>
      <li><svg class="t"><use href="#t-mid"/></svg><svg class="i"><use href="#window"/></svg>窗(C)</li>
      <li><svg class="t"><use href="#t-mid"/></svg><svg class="i"><use href="#doorwin"/></svg>门联窗(A)</li>
      <li><svg class="t"><use href="#t-mid"/></svg><svg class="i"><use href="#hole"/></svg>墙洞(D)</li>
      <li><svg class="t"><use href="#t-mid"/></svg><svg class="i"><use href="#niche"/></svg>壁龛(I)</li>
      <li><svg class="t"><use href="#t-mid"/></svg><svg class="i"><use href="#lbeam"/></svg>连梁(G)</li>
      <li><svg class="t"><use href="#t-mid"/></svg><svg class="i"><use href="#lintel"/></svg>过梁(G)</li>
      <li><svg class="t"><use href="#t-mid"/></svg><svg class="i"><use href="#striphole"/></svg>带形洞</li>
      <li><svg class="t"><use href="#t-end"/></svg><svg class="i"><use href="#stripwin"/></svg>带形窗</li>
      <li class="f"><svg class="t"><use href="#t-open"/></svg>梁</li>
      <li><svg class="t"><use href="#t-mid"/></svg><svg class="i"><use href="#beamL"/></svg>梁(L)</li>
      <li><svg class="t"><use href="#t-end"/></svg><svg class="i"><use href="#ringbeam"/></svg>圈梁(E)</li>
      <li class="f"><svg class="t"><use href="#t-shut"/></svg>板</li>
      <li class="f"><svg class="t"><use href="#t-shut"/></svg>基础</li>
      <li class="f"><svg class="t"><use href="#t-open"/></svg>其它</li>
      <li><svg class="t"><use href="#t-mid"/></svg><svg class="i"><use href="#pour"/></svg>后浇带(JD)</li>
      <li><svg class="t"><use href="#t-mid"/></svg><svg class="i"><use href="#eave"/></svg>挑檐(T)</li>
      <li><svg class="t"><use href="#t-mid"/></svg><svg class="i"><use href="#rail"/></svg>栏板(K)</li>
      <li><svg class="t"><use href="#t-end"/></svg><svg class="i"><use href="#coping"/></svg>压顶(YD)</li>
      <li class="f"><svg class="t"><use href="#t-open"/></svg>自定义</li>
      <li><svg class="t"><use href="#t-mid"/></svg><svg class="i"><use href="#cpoint"/></svg>自定义点</li>
      <li class="sel"><svg class="t"><use href="#t-mid"/></svg><span><svg class="i"><use href="#cline"/></svg>自定义线(X)</span><svg class="col" width="13" height="14"><path d="M.5.500h12v13H.5z" fill="#cfe6fb" stroke="#1f7ad0"/><path d="M2.500 3h3v8h-3zM7.500 3h3v8h-3zM2 6h4M7 6h4" fill="#fff" stroke="#1f7ad0"/></svg></li>
      <li><svg class="t"><use href="#t-mid"/></svg><svg class="i"><use href="#cface"/></svg>自定义面</li>
      <li><svg class="t"><use href="#t-end"/></svg><svg class="i"><use href="#cdim"/></svg>尺寸标注(W)</li>
      <li class="f"><svg class="t"><use href="#t-open"/></svg>CAD识别<svg width="40" height="14"><path d="M.5 1h13v12H.5z" fill="#cfe6fb" stroke="#1f7ad0"/><path d="M16 2h22v10H16z" fill="#f6d51c"/></svg></li>
    </ul>
    <div class="vs"><svg class="i"><use href="#s-up"/></svg><span class="thumb treethumb"></span><svg class="i"><use href="#s-down"/></svg></div>
    <div class="hs"><svg class="i"><use href="#s-left"/></svg><span class="thumb"></span><svg class="i"><use href="#s-right"/></svg></div><div class="corner"></div>
  </div>
  <button class="navbtn">单构件输入</button>
  <button class="navbtn">报表预览</button>
</aside>

<main class="main">
  <div class="row sub">
    <div class="bar off"><span class="gripper"></span><button class="tb"><svg class="i"><use href="#erase"/></svg>删除</button><span class="sep"></span><button class="tb"><svg class="i"><use href="#copy"/></svg>复制</button><button class="tb"><svg class="i"><use href="#mirror"/></svg>镜像</button><span class="sep"></span><button class="tb"><svg class="i"><use href="#move"/></svg>移动</button><button class="tb"><svg class="i"><use href="#rotate"/></svg>旋转</button><span class="sep"></span><button class="tb"><svg class="i"><use href="#extend"/></svg>延伸</button><button class="tb"><svg class="i"><use href="#trim"/></svg>修剪</button><span class="sep"></span><button class="tb"><svg class="i"><use href="#break"/></svg>打断</button><button class="tb"><svg class="i"><use href="#merge"/></svg>合并</button><button class="tb"><svg class="i"><use href="#split"/></svg>分割</button><span class="sep"></span><button class="tb"><svg class="i"><use href="#align"/></svg>对齐<span class="ar tight"></span></button><button class="tb"><svg class="i"><use href="#offset"/></svg>偏移</button><button class="tb"><svg class="i"><use href="#stretch"/></svg>拉伸</button><span class="sep"></span><button class="tb"><svg class="i"><use href="#grip"/></svg>设置夹点</button></div>
  </div>
  <div class="row sub spaced">
    <div class="bar"><span class="gripper"></span>
      <label class="combo c1"><select aria-label="楼层"><option>第2层</option></select><span class="ar"></span></label>
      <label class="combo"><select aria-label="构件类别"><option>自定义</option></select><span class="ar"></span></label>
      <label class="combo"><select aria-label="构件类型"><option>自定义线</option></select><span class="ar"></span></label>
      <label class="combo"><select aria-label="构件"><option>ZDYX-3</option></select><span class="ar"></span></label>
      <span class="sep"></span><button class="tb"><svg class="i"><use href="#prop"/></svg>属性</button><button class="tb on"><svg class="i"><use href="#editbar"/></svg>编辑钢筋</button><button class="tb"><svg class="i"><use href="#list"/></svg>构件列表</button><button class="tb"><svg class="i"><use href="#pick"/></svg>拾取构件</button></div>
    <div class="bar"><span class="gripper"></span><button class="tb"><svg class="i"><use href="#ax2"/></svg>两点</button><button class="tb"><svg class="i"><use href="#ax3"/></svg>平行</button><button class="tb"><svg class="i"><use href="#ax4"/></svg>点角<span class="ar"></span></button><button class="tb"><svg class="i"><use href="#ax5"/></svg>三点辅轴<span class="ar"></span></button><button class="tb"><svg class="i"><use href="#delax"/></svg>删除辅轴</button><button class="tb"><svg class="i"><use href="#dim"/></svg>长度标注<span class="ar"></span></button></div>
  </div>
  <div class="row sub stub"><div class="bar"><span class="gripper"></span></div></div>
  <div class="row sub">
    <div class="bar"><span class="gripper"></span><button class="tb"><svg class="i"><use href="#cursor"/></svg>选择<span class="ar"></span></button><span class="sep"></span><button class="tb"><svg class="i"><use href="#line"/></svg>直线</button><button class="tb"><svg class="i"><use href="#ptlen"/></svg>点加长度</button><button class="tb"><svg class="i"><use href="#arc3"/></svg>三点画弧<span class="ar"></span></button><label class="combo c1"><select aria-label="画弧方式"><option></option></select><span class="ar"></span></label><button class="tb"><svg class="i"><use href="#rect"/></svg>矩形</button><span class="sep"></span><button class="tb"><svg class="i"><use href="#smart"/></svg>智能布置<span class="ar tight"></span></button></div>
  </div>

  <section class="view">
    <svg viewBox="170 194 1196 202" preserveAspectRatio="xMinYMin slice" shape-rendering="crispEdges">
      <path d="M170 194h1196v202H170z" fill="#000"/>
      <path d="M170 243.500L948 196M170 270L956 222M170 387L489 367 819 347 1177 325M1297 318L1362 314.500M1353 304h13M1071 396L1366 378M320 194L346 262 396 396M652 194L728 396M864 194L939 396M910 194L984 396M1018 280L1060 396M1024 284L1065 396M1105 314L1135 396M1312 315L1342 396M1352 301L1366 338M1357 300L1366 322M1116 317L1009 395" fill="none" stroke="#f00"/>
      <g transform="translate(480 190) scale(.3333)" fill="none">
        <g stroke="#9b8d86" stroke-width="3">
          <g id="rb"><path d="M148 12L134 270 125 450 112 618M157 12L142 270 133 440 121 618"/><path d="M207 12L193 270 184 450 171 618M215 12L201 270 192 440 180 618"/><path d="M266 12L252 270 243 450 230 618M274 12L260 270 251 440 239 618"/></g>
          <use href="#rb" x="176"/><use href="#rb" x="352"/><use href="#rb" x="528"/>
          <path d="M852 12L838 270 829 450 820 606M861 12L846 270 837 440 825 600M911 12L897 270 888 450 879 604M919 12L905 270 896 440M970 12L956 270 947 450 938 602M978 12L964 270M1020 60L1008 450 997 600"/>
        </g>
        <g stroke="#777" stroke-width="3"><circle cx="863" cy="315" r="268"/><circle cx="862" cy="45" r="17"/><circle cx="1131" cy="315" r="17"/><circle cx="862" cy="584" r="17"/><circle cx="594" cy="315" r="17"/></g>
        <g stroke="#fff" stroke-width="6">
          <path d="M52 90L1025 30M62 121L1035 62M62 173L1020 115M65 188L1040 130M65 215L1035 156M55 300L1030 240M60 315L1030 257M58 341L1030 283M52 378L1025 320M55 395L1025 337M55 418L1025 362M48 453L1020 397M50 469L1020 412M50 495L1020 438M28 527L1002 468M42 546L1018 490M45 573L1015 515"/>
          <path d="M52 90L28 528 45 573M52 95L64 121 58 200 55 330 48 400 42 490 38 540M58 200l8 15M58 325l0 16M50 402l5 16M45 482l5 14M1022 30L1020 180 1010 300 1000 470M1025 30L1038 62 1040 155 1032 160 1025 240 1032 280 1022 285 1028 345 1018 400 1022 440 1012 440 1018 515"/>
        </g>
        <path d="M65 196L1040 138M60 323L1030 265M55 402L1025 345M50 478L1020 420M30 533L1002 473" stroke="#fff" stroke-width="4" stroke-dasharray="60 8"/>
      </g>
      <path d="M948 194C950 270 1080 326.500 1212 326.500 1270 326.500 1325 314 1366 297V194z" fill="url(#gDisc)"/>
      <g fill="none" stroke="#e5e5e5" stroke-width="5" stroke-linejoin="round">
        <path d="M952 194Q953 206 959 217 970 236 993 253 1008 265 1026 275 1042 284 1059 290 1075 297 1093 301.500 1112 306 1133 310 1173 316 1216 315.500 1240 315 1259 313 1293 309 1326 298 1350 291 1366 284" stroke-width="6"/>
        <path d="M965 194Q977 209 993 222 1008 236 1026 247 1042 256 1059 263 1075 269 1093 274 1112 279 1133 283 1173 290 1213 290 1237 290 1259 288 1293 284 1326 273 1350 266 1366 258"/>
        <path d="M989 194L1006 208Q1015 215 1026 222 1042 231 1059 238 1075 244 1093 249 1112 254 1133 258 1173 264 1216 264 1238 264 1259 262 1293 258 1326 248 1350 241 1366 233"/>
        <path d="M1027 194Q1042 204 1059 211 1075 217 1093 222 1112 228 1133 232 1173 239 1216 238.500 1238 238 1259 236 1293 232 1326 223 1350 216 1366 209"/>
      </g>
      <path d="M1156 194Q1216 203 1282 194z" fill="#e5e5e5"/>
    </svg>
    <div class="float">
      <h3>钢筋显示控制面板</h3>
      <div class="checks song">
        <label><input type="checkbox" checked>水平纵筋</label><label><input type="checkbox" checked>横向钢筋</label><label><input type="checkbox" checked>显示其它图元</label><label><input type="checkbox" checked>显示详细公式</label>
      </div>
    </div>
  </section>

  <div class="row snap">
    <div class="bar"><span class="gripper"></span><button class="tb"><svg class="i"><use href="#cross"/></svg>交点</button><button class="tb on"><svg class="i"><use href="#perp"/></svg>垂点</button><button class="tb on"><svg class="i"><use href="#mid"/></svg>中点</button><button class="tb"><svg class="i"><use href="#vertex"/></svg>顶点</button><button class="tb"><svg class="i"><use href="#coord"/></svg>坐标</button></div>
    <div class="bar coords"><span class="gripper"></span><label class="combo c1"><select aria-label="偏移方式"><option>不偏移</option></select><span class="ar"></span></label><span class="sep"></span>
      <label for="ox">X=</label><span class="spin"><input id="ox" value="0"><span class="ud"></span></span><span class="u">mm</span><label for="oy">Y=</label><span class="spin"><input id="oy" value="0"><span class="ud"></span></span><span class="u">mm</span><span class="sep"></span><label class="rot"><input type="checkbox">旋转</label><span class="spin wide"><input aria-label="旋转角度" value="0.000"><span class="ud"></span></span><span>°</span></div>
  </div>

  <section class="data">
    <div class="rail"><svg width="10" height="10"><path d="M.5.500h9v9h-9z" fill="#fff" stroke="#4a2c34"/><path d="M2 2l6 6M8 2L2 8" stroke="#4a2c34" stroke-width="1.500"/></svg><i></i></div>
    <div class="datamain">
      <div class="bar databar"><button class="tb" aria-label="第一条"><svg class="i"><use href="#first"/></svg></button><button class="tb" aria-label="上一条"><svg class="i"><use href="#prev"/></svg></button><button class="tb" aria-label="下一条"><svg class="i"><use href="#next"/></svg></button><button class="tb" aria-label="最后一条"><svg class="i"><use href="#last"/></svg></button><span class="sep"></span><button class="tb" aria-label="上移"><svg class="i"><use href="#up"/></svg></button><button class="tb" aria-label="下移"><svg class="i"><use href="#down"/></svg></button><span class="sep"></span><button class="tb off"><svg class="i"><use href="#insrow"/></svg>插入</button><button class="tb off"><svg class="i"><use href="#delrow"/></svg>删除</button><button class="tb off"><svg class="i"><use href="#scale"/></svg>缩尺配筋</button><button class="tb"><svg class="i"><use href="#info"/></svg>钢筋信息</button><button class="tb"><svg class="i"><use href="#lib"/></svg>钢筋图库</button><button class="tb"><svg class="i"><use href="#other"/></svg>其他<span class="ar tight"></span></button><button class="tb">关闭</button><span class="sep"></span><span class="total">单构件钢筋总重(kg)：67.439</span></div>
      <div class="gridbox song">
        <div class="gridview">
        <table>
          <colgroup><col class="w0"><col class="w1"><col class="w2"><col class="w3"><col class="w4"><col class="w5"><col class="w6"><col class="w7"><col class="w8"><col class="w9"><col class="w10"><col class="w11"><col class="w12"></colgroup>
          <thead><tr><th></th><th>筋号</th><th>直径(mm)</th><th>级别</th><th>图号</th><th>图形</th><th>计算公式</th><th>公式描述</th><th>长度(mm)</th><th class="hot">根数</th><th>搭接</th><th>损耗(%)</th><th>总重(kg)</th></tr></thead>
          <tbody>
          <tr class="tall"><th class="cur">1*</th><td class="blk cjk">横向钢筋.1</td><td>10</td><td class="g"><svg class="i"><use href="#grade"/></svg></td><td>0</td><td class="fig"><svg viewBox="0 0 200 60"><path d="M95 13v43" stroke="#000" stroke-width="2"/><g transform="translate(109 54) rotate(-90)"><text>400</text><text x="19">1705</text><text x="37">500</text></g></svg></td><td>40*d+1700+40*d</td><td class="cjk">端头+净长+端头</td><td>2500</td><td class="pick">16</td><td>0</td><td>0</td><td>24.68</td></tr>
          <tr class="tall"><th>2</th><td class="blk cjk">横向钢筋.2</td><td>10</td><td class="g"><svg class="i"><use href="#grade"/></svg></td><td>0</td><td class="fig"><svg viewBox="0 0 200 60"><path d="M105 18v39" stroke="#000" stroke-width="2"/><g transform="translate(92 3) rotate(90)"><text>400</text><text x="11">1705</text><text x="33">400</text></g></svg></td><td>40*d+1700+40*d</td><td class="cjk">端头+净长+端头</td><td>2500</td><td>16</td><td>0</td><td>0</td><td>24.68</td></tr>
          <tr><th>3</th><td class="blk cjk">横向钢筋.3</td><td>8</td><td class="g"><svg class="i"><use href="#grade"/></svg></td><td>0</td><td class="fig"><svg viewBox="0 0 200 38"><use href="#hook"/><text transform="translate(59 5) rotate(90)">50</text><text transform="translate(134 6) rotate(90)">50</text><text x="93" y="39">249</text></svg></td><td>349</td><td class="cjk">净长</td><td>349</td><td>16</td><td>0</td><td>0</td><td>2.206</td></tr>
          <tr><th>4</th><td class="blk cjk">横向钢筋.4</td><td>8</td><td class="g"><svg class="i"><use href="#grade"/></svg></td><td>0</td><td class="fig"><svg viewBox="0 0 200 38"><use href="#hook"/><text transform="translate(59 5) rotate(90)">50</text><text transform="translate(134 6) rotate(90)">50</text><text x="93" y="39">249</text></svg></td><td>349</td><td class="cjk">净长</td><td>349</td><td>16</td><td>0</td><td>0</td><td>2.206</td></tr>
          <tr><th></th><td class="blk"></td><td></td><td></td><td></td><td class="fig"><svg viewBox="0 0 200 38"><use href="#hook"/><text transform="translate(59 5) rotate(90)">50</text><text transform="translate(134 6) rotate(90)">50</text></svg></td><td></td><td></td><td></td><td></td><td></td><td></td><td></td></tr>
          </tbody>
        </table>
        </div>
        <div class="vs"><svg class="i"><use href="#s-up"/></svg><span class="thumb gridthumb"></span><svg class="i end"><use href="#s-down"/></svg></div>
        <div class="hs"><svg class="i"><use href="#s-left"/></svg><span class="thumb gridh"></span><svg class="i end"><use href="#s-right"/></svg></div><div class="corner"></div>
      </div>
    </div>
  </section>
</main>
</div>

<footer class="status song"><span class="s1 num">X=62858 Y=8822</span><span class="s2">层高:4.5m</span><span class="s3">底标高:4.45m</span><span class="s4 num">1(2)</span><span class="grow"></span><span class="s5 num">32 FPS</span></footer>

<div class="task">
  <button class="start" aria-label="开始"><svg width="16" height="16"><path d="M0 2.500l6.500-1v6H0zM7.500 1.300L16 0v7.500H7.500zM0 8.500h6.500v6L0 13.500zM7.500 8.500H16V16l-8.500-1.300z" fill="#fff"/></svg></button>
  <label class="search"><svg width="22" height="22"><circle cx="11" cy="11" r="9" fill="none" stroke="#111" stroke-width="3"/></svg><input placeholder="在这里输入你要搜索的内容" aria-label="搜索"><svg width="12" height="18"><path d="M3.500 1h5v9h-5zM1 8v4h10V8M6 12v5M3 16.500h6" fill="none" stroke="#333"/></svg></label>
  <button class="pin" aria-label="任务视图"><svg width="20" height="20"><path d="M1 2.500h3M10 2.500h3M3.500 2v3h8V2M3.500 8.500h8v5h-8zM3.500 19v-2h8v2M16 2v16" fill="none" stroke="#fff" stroke-width="1.300"/><path d="M14.500 6h3v4h-3z" fill="#fff"/></svg></button>
  <button class="pin" aria-label="浏览器"><svg width="22" height="22"><circle cx="11" cy="11" r="6" fill="#e4e4e4"/><g fill="#e4e4e4"><circle cx="6.500" cy="6" r="5"/><circle cx="16" cy="6.500" r="5"/><circle cx="15.500" cy="16" r="5"/><circle cx="6" cy="15.500" r="5"/></g><path d="M1 11q6 2 10 0 2-4-1-10M11 11q5-3 10-1M11 11q3 3 1 10M11 11q-2 3-9 1" fill="none" stroke="#04151b" stroke-width="1.200"/></svg></button>
  <button class="pin" aria-label="Internet Explorer"><svg width="24" height="24"><path d="M20 15Q18 21 12 21 5 20.500 5 13 6 5.500 12.500 5.500 20 6 20 13H7" fill="none" stroke="#e8e8e8" stroke-width="3.500"/><path d="M5 21Q1 24 2 18 6 7 17 3q6-1 4 4" fill="none" stroke="#e8e8e8" stroke-width="1.500"/></svg></button>
  <button class="pin" aria-label="G浏览器"><svg width="22" height="22"><path d="M19 3Q9 0 4 7q-3 8 3 12 7 2 10-4 1-5-4-5-4 1-3 4M15 6Q8 4 6 10q-1 5 3 7 4 0 5-4" fill="none" stroke="#ddd" stroke-width="1.500"/></svg></button>
  <span class="tsep"></span>
  <button class="pin run" aria-label="广联达G"><svg width="26" height="26"><path d="M23 0Q22 6 15 7q-6 0-7 6 1 6 6 6 4-1 4-4-2-2-4-1l2-3q4-1 8 0 1 9-6 13-9 3-15-4Q-1 9 8 4q8-2 15-4z" fill="#1599f0"/></svg></button>
  <button class="pin run cur" aria-label="广联达GGJ"><svg width="24" height="24"><use href="#logo"/></svg></button>
  <button class="pin run" aria-label="便笺"><svg width="26" height="26"><rect x="1" y="1" width="24" height="24" rx="3" fill="#f0a012"/><path d="M5 4h13v17H5z" fill="#fff"/><path d="M7 8h8M7 11h7M7 14h5" stroke="#c08a30"/><path d="M10 19l2-5 9-9 2 2-9 9z" fill="#a86400" stroke="#fff" stroke-width=".7"/></svg></button>
  <button class="pin run" aria-label="PDF"><svg width="26" height="26"><rect x="1" y="1" width="24" height="24" rx="3" fill="#c8741e" stroke="#b9aca0"/><text x="4" y="17" class="pdf">PDF</text></svg></button>
  <div class="tscroll"><svg class="i"><use href="#s-up"/></svg><svg class="i"><use href="#s-down"/></svg></div>
  <div class="tray">
    <span class="tsep"></span><span class="lnk">链接</span>
    <svg width="16" height="16"><circle cx="9" cy="5" r="3.500" fill="none" stroke="#fff" stroke-width="1.300"/><path d="M1 15q0-5 4-6M5 9q5-2 8 5M13 4l2-1" fill="none" stroke="#fff" stroke-width="1.300"/></svg>
    <span class="two cpu">32%<br>CPU使用</span>
    <svg width="14" height="12"><path d="M1 9l6-6 6 6" fill="none" stroke="#fff" stroke-width="1.300"/></svg>
    <svg width="14" height="16"><path d="M7 1q5 0 5 6v3l2 3H0l2-3V7q0-6 5-6zM5 14h4v1.500H5z" fill="#fff"/></svg>
    <svg width="16" height="12"><path d="M6 3.500h8.500v7H5M14.500 5.500H16v3M1 1v3h4V1M3 4v5h3" fill="none" stroke="#fff" stroke-width="1.300"/><path d="M7 5h6v4H7z" fill="#fff"/></svg>
    <svg width="14" height="14"><path d="M1 13Q2 3 13 1M4 13q1-7 9-8M7 13q1-4 6-5M10 13q1-2 3-2" fill="none" stroke="#bbb" stroke-width="1.300"/></svg>
    <svg width="16" height="14"><path d="M1 5h2.500L7 1.500v11L3.500 9H1zM9 5q1.500 2 0 4M11 3q3 4 0 8M13 1.500q4 5.500 0 11" fill="none" stroke="#eee"/></svg>
    <svg width="23" height="14"><path d="M.5.500h22v13H.5z" fill="none" stroke="#fff"/><path d="M3 4h17M3 7h17" stroke="#fff" stroke-dasharray="2 1"/><path d="M6 10.500h11" stroke="#fff"/></svg>
    <span class="ime">中</span>
    <svg width="16" height="16"><path d="M2 0l13 1 1 13-13 2L0 3z" fill="#f0501e"/><path d="M12 4H6q-2 2 1 3.500 5 1 3 4H4" fill="none" stroke="#fff" stroke-width="2"/></svg>
    <span class="two clock">15:07<br>2018/9/7</span>
    <span class="note"><svg width="26" height="26"><path d="M1 4h16v12H9l-3 3v-3H1z" fill="#fff"/><path d="M4 7.500h10M4 10h10M4 12.500h6" stroke="#04151b"/><circle cx="17" cy="18" r="8" fill="#4a4f52" stroke="#888"/></svg><b>3</b></span>
  </div>
</div>
</div>
</body>
</html>
```
FILE: styles.css
```css
* { box-sizing: border-box; }
body { margin: 0; background: #f0f0f0; color: #000; font: 12px/16px "Open Sans", "Noto Sans CJK SC", sans-serif; }
h1, h2, h3, ul { margin: 0; padding: 0; font: inherit; list-style: none; }
button, select, input { margin: 0; padding: 0; border: 0; background: none; color: inherit; font: inherit; }
a { color: inherit; text-decoration: none; }
.defs { position: absolute; width: 0; height: 0; }
.song { font-family: "Liberation Serif", "Noto Sans CJK SC", serif; }
.i { width: 16px; height: 16px; flex: none; display: block; }
.grow { flex: 1; }
.app { display: flex; flex-direction: column; min-height: 100vh; overflow: hidden; }

.title { position: relative; display: flex; align-items: center; height: 23px; padding: 0 20px 0 2px; background: #fff; color: #999; }
.title h1 { margin-left: 5px; white-space: nowrap; }
.winbtns { display: flex; gap: 34px; margin-left: auto; }
.winbtns svg { display: block; }
.badge { position: absolute; left: 462px; top: -26px; width: 45px; height: 45px; border-radius: 50%; background: linear-gradient(#2aa345, #45cf60); border: 2px solid #2c9a44; box-shadow: 0 2px 5px #0006; color: #fff; font-weight: 700; font-size: 11px; text-align: center; padding-top: 23px; }

.row { display: flex; align-items: stretch; }
.bar { display: flex; align-items: center; gap: 1px; background: linear-gradient(#fff, #f1f1f1); border-radius: 3px; white-space: nowrap; }
.menurow { height: 30px; padding-top: 1px; gap: 2px; }
.menu { display: flex; align-items: center; gap: 11px; flex: 0 0 935px; padding-left: 7px; white-space: nowrap; }
.menu button:nth-child(n+7) { margin-right: 1px; }
.menu .tb:nth-child(n) { margin: 0 -4px 0 -7px; }
.ad { flex: 0 0 187px; justify-content: center; color: #5b2d00; }
.account .tb { margin-right: 2px; }
.mainbar { height: 30px; gap: 3px; padding-bottom: 2px; margin-top: 1px; }
.quick { flex: 0 0 151px; padding-left: 2px; }
.quick .ar { margin-right: 1px; }
.tools { flex: 0 0 548px; }
.more { margin: 0 2px 12px auto; }
.quick .more { margin-right: 0; }
.account .more, .mainbar .grow .more { margin-right: 1px; }
.tb { display: flex; align-items: center; gap: 4px; height: 22px; padding: 0 3px; white-space: nowrap; }
.tb.on { background: #dfecf7; box-shadow: 0 0 0 1px #0078d7; }
.tb.white { background: #fff; }
.off { color: #8b8b8b; }
.ar { width: 6px; height: 3px; margin: 0 0 0 2px; background: currentColor; clip-path: polygon(0 0, 100% 0, 50% 100%); }
.ar.tight { margin: 0 0 0 -2px; }
.sep { width: 5px; height: 22px; background: linear-gradient(#b4b4b4, #b4b4b4) 2px 0 / 1px 100% no-repeat; }
.sub .sep { height: 16px; }
.gripper { width: 2px; height: 15px; margin: 0 1px 0 2px; background: repeating-linear-gradient(#bbb 0 2px, transparent 2px 4px); }
.gripper + .tb { margin-left: 1px; }

.work { display: flex; flex: 1; }
.dock { width: 165px; display: flex; flex-direction: column; }
.docktitle { display: flex; justify-content: space-between; align-items: center; height: 15px; border: 1px solid #8a8a8a; border-left: 0; margin-bottom: 2px; }
.navbtn { height: 22px; border: 1px solid #9b9b9b; border-top-color: #fff; box-shadow: inset 0 1px #bbb; background: #f1f1f1; }
.expand { height: 27px; padding: 5px 5px 0; border: 1px solid #999; border-width: 1px 1px 0; background: linear-gradient(#fff, #ececec); }
.treebox { flex: 1; display: grid; grid-template-columns: 1fr 15px; grid-template-rows: 467px 16px; height: 488px; border: 2px solid #8a8f98; padding-right: 1px; margin-bottom: 1px; background: #fff; }
.tree { overflow: hidden; margin-left: -2px; }
.tree li { display: flex; align-items: center; height: 16px; white-space: nowrap; }
.tree .t { width: 46px; height: 16px; flex: none; }
.tree .i { margin-right: 4px; }
.tree .f { gap: 1px; }
.sel span { display: flex; background: #d9d9d9; }
.sel .col { flex: none; }
.vs, .hs { display: flex; align-items: center; background: #f0f0f0; }
.corner { background: #f0f0f0; }
.vs { flex-direction: column; }
.thumb { background: #cdcdcd; }
.treethumb { width: 100%; flex: 0 0 279px; margin-top: 145px; margin-bottom: 10px; }
.treebox .hs .thumb { height: 14px; width: 102px; margin: 0 5px 0 3px; }
.end { margin-left: auto; }

.main { flex: 1; min-width: 0; padding-left: 5px; display: flex; flex-direction: column; }
.sub { height: 27px; padding-left: 1px; }
.sub .bar { padding-right: 4px; }
.sub:first-child { height: 26px; margin-bottom: 1px; }
.spaced { gap: 32px; }
.stub { height: 24px; padding-left: 414px; margin: 2px 0 3px; }
.stub .bar { padding-right: 25px; height: 23px; }
.combo { display: grid; grid-template-columns: 1fr 12px; align-items: center; width: 70px; height: 23px; margin-right: 1px; background: #fff; }
.combo.c1 { width: 58px; margin-left: 1px; }
.combo select { grid-area: 1 / 1 / 2 / 3; width: 100%; height: 23px; padding-left: 3px; appearance: none; }
.combo .ar { grid-area: 1 / 2; margin: 0 0 0 3px; }

.view { position: relative; height: 202px; background: #000; }
.view > svg { display: block; width: 100%; height: 100%; }
.float { position: absolute; left: 10px; top: 2px; width: 167px; height: 179px; background: #fff; border: 1px solid #222; }
.float h3 { padding: 8px 7px 7px; color: #999; }
.checks { height: 146px; border: 2px solid #858b92; padding: 1px 3px; }
.checks label { display: flex; align-items: center; gap: 3px; height: 12px; line-height: 12px; }
input[type="checkbox"] { appearance: none; width: 11px; height: 11px; border: 1px solid #888; background: #fff; }
input[type="checkbox"]:checked::after { content: ""; display: block; width: 3px; height: 6px; margin: 0 3px; border: solid #444; border-width: 0 1px 1px 0; transform: rotate(40deg); }

.snap { height: 29px; margin-top: 1px; padding-left: 212px; gap: 2px; }
.snap .bar:first-child { padding-right: 2px; }
.coords { color: #777; }
.coords .combo, .coords .rot { color: #000; }
.spin { display: flex; align-items: center; width: 58px; height: 23px; margin: 0 1px 0 3px; border: 1px solid #777; background: #f7f7f7; }
.spin.wide { width: 68px; margin-left: 3px; }
.spin input { width: 0; flex: 1; text-align: right; color: #888; }
.ud { width: 7px; height: 16px; margin: 0 4px 0 7px; background: linear-gradient(#666 0 4px, transparent 4px 12px, #666 12px); clip-path: polygon(50% 0, 100% 25%, 100% 75%, 50% 100%, 0 75%, 0 25%); }
.u { margin-right: 3px; }
.rot { display: flex; align-items: center; gap: 9px; }

.data { flex: 1; display: flex; margin-top: 4px; padding-right: 1px; }
.rail { width: 12px; padding-left: 1px; display: flex; flex-direction: column; gap: 2px; }
.rail svg { flex: none; }
.rail i { flex: 1; background: radial-gradient(circle, #aaa 1px, transparent 1px) 0 0 / 5px 5px; }
.datamain { flex: 1; min-width: 0; display: flex; flex-direction: column; }
.databar { height: 26px; }
.databar .tb:nth-child(-n+3) { margin-right: 1px; }
.databar .sep { height: 16px; }
.total { padding-left: 5px; }
.gridbox { flex: 1; display: grid; grid-template-columns: minmax(0, 1fr) 16px; grid-template-rows: 230px 17px; border: 1px solid #a9a9a9; border-left-width: 2px; padding-right: 1px; }
.gridview { overflow: hidden; background: #fff; }
table { width: 1182px; table-layout: fixed; border-collapse: separate; border-spacing: 0; }
.w0 { width: 33px; } .w1 { width: 73px; } .w2 { width: 56px; } .w3 { width: 36px; } .w4 { width: 33px; }
.w5 { width: 201px; } .w6 { width: 166px; } .w7 { width: 205px; } .w8 { width: 61px; } .w9 { width: 170px; }
.w10 { width: 39px; } .w11 { width: 49px; } .w12 { width: 60px; }
th, td { height: 39px; padding: 0 2px; border: solid #bdbdbd; border-width: 0 1px 1px 0; font-weight: 400; text-align: left; white-space: nowrap; }
th { text-align: center; background: linear-gradient(#fff, #f3f3f3); }
thead th { height: 20px; padding: 0; }
td { background: #ccffd9; }
td, tbody th, .fig text, .status .num { font: 10px/16px "DejaVu Sans Mono", monospace; }
td.cjk { font: 12px/16px "Liberation Serif", "Noto Sans CJK SC", serif; }
.tall th, .tall td { height: 61px; }
.blk { border-right-color: #000; }
.hot { background: linear-gradient(#fad49a, #f0ba5c); color: #5a0050; }
th.cur { background: #ffd28a; color: #5a0050; }
td.pick { background: #adead9; }
.g .i { margin: 0 auto; }
.fig { padding: 0; }
.fig svg { display: block; width: 200px; height: 38px; }
.tall .fig svg { height: 60px; }
.gridthumb { width: 100%; height: 58px; }
.vs .end { margin: auto 0 0; }
.gridbox .hs { border-top: 1px solid #fff; }
.gridh { width: 626px; height: 15px; margin-left: 1px; }

.status { display: flex; gap: 3px; height: 22px; padding-top: 2px; background: #fff; }
.status span { border: 1px solid #cfcfcf; background: linear-gradient(#fafafa, #efefef); line-height: 18px; padding-left: 1px; white-space: nowrap; overflow: hidden; }
.status .num { line-height: 18px; }
.s1 { width: 148px; } .s2 { width: 77px; } .s3 { width: 97px; } .s4 { width: 48px; } .s5 { width: 69px; }

.task { display: flex; align-items: stretch; height: 40px; background: #04151b; color: #fff; }
.start { width: 48px; background: #0a1012; }
.start svg, .pin svg { display: block; margin: auto; }
.search { display: flex; align-items: center; gap: 10px; flex: 0 0 344px; padding: 0 14px 0 8px; background: #f0f0f0; color: #333; }
.search input { flex: 1; min-width: 0; font-size: 14px; }
.search input::placeholder { color: #333; opacity: 1; }
.pin { width: 50px; border-bottom: 2px solid transparent; }
.pin.run { width: 39px; margin: 0 5px; border-bottom: 2px solid #76b9ed; }
.pin.cur { margin: 0; width: 49px; background: #1f3238; }
.pdf { font: 700 9px "Liberation Sans", sans-serif; fill: #ffe; }
.tsep { width: 4px; height: 18px; margin: auto 9px; border: solid #3c4a4f; border-width: 0 1px; }
.tscroll { width: 16px; margin-left: 18px; background: #f0f0f0; display: flex; flex-direction: column; justify-content: space-between; }
.tray { flex: 1; display: flex; align-items: center; gap: 9px; padding-right: 4px; border-right: 1px solid #444; margin-right: 4px; }
.tray svg { flex: none; }
.tray .tsep { margin-right: 0; margin-left: 13px; }
.two { text-align: center; line-height: 18px; }
.lnk { margin-right: 16px; }
.cpu { margin: 0 10px 0 21px; }
.ime { margin: 0 3px 0 2px; font-size: 13px; }
.clock { margin: 0 0 0 11px; }
.note { position: relative; display: flex; margin-left: auto; }
.note b { position: absolute; left: 14px; top: 10px; }
```
